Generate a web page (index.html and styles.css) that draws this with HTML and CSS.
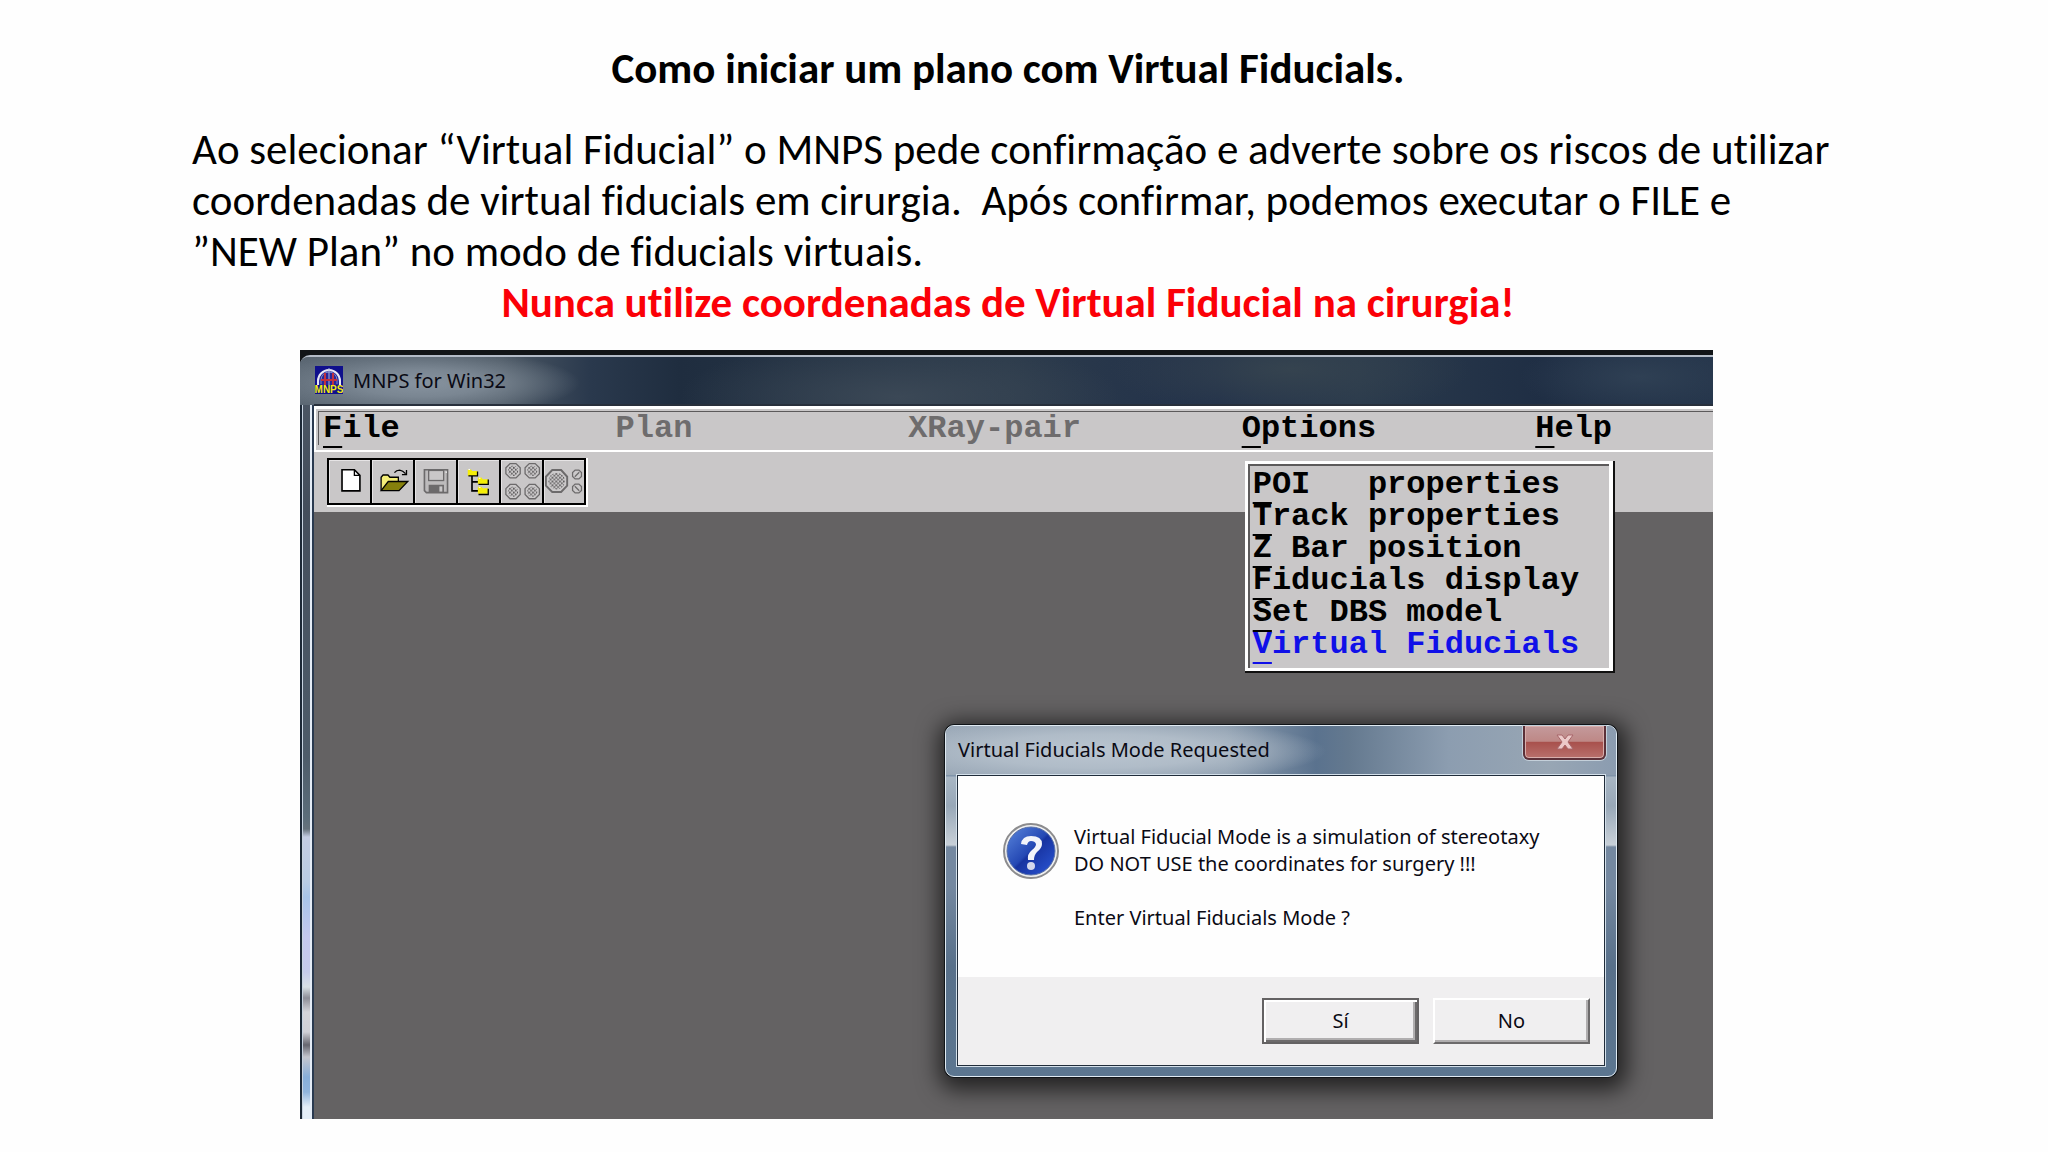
FILE: index.html
```html
<!DOCTYPE html>
<html lang="pt">
<head>
<meta charset="utf-8">
<title>Como iniciar um plano com Virtual Fiducials</title>
<link rel="stylesheet" href="styles.css">
</head>
<body>
<main class="slide">
  <h1 class="slide-title">Como iniciar um plano com Virtual Fiducials.</h1>
  <p class="slide-text">Ao selecionar “Virtual Fiducial” o MNPS pede confirmação e adverte sobre os riscos de utilizar<br>coordenadas de virtual fiducials em cirurgia.&nbsp; Após confirmar, podemos executar o FILE e<br>”NEW Plan” no modo de fiducials virtuais.</p>
  <p class="slide-warning">Nunca utilize coordenadas de Virtual Fiducial na cirurgia!</p>

  <section class="desktop" aria-label="MNPS for Win32">
    <div class="window">
      <header class="titlebar">
        <svg class="app-icon" viewBox="0 0 28 28" aria-hidden="true">
          <rect width="28" height="28" fill="#10108c"/>
          <path d="M3 19V15a11 11 0 0 1 22 0v4" fill="#26269a" stroke="#e8e8f4" stroke-width="2"/>
          <path d="M6 18V14a8 8 0 0 1 16 0v4" fill="none" stroke="#7c88c8"/>
          <path d="M14 2V19" stroke="#aab4d8" stroke-width="1"/>
          <path d="M10 7v12M18 7v12M6 14h16" stroke="#c03040" stroke-width="2"/>
          <text x="14" y="27" text-anchor="middle" class="app-icon-text">MNPS</text>
        </svg>
        <span class="title-glow">MNPS for Win32</span>
      </header>
      <div class="client">
        <nav class="menubar">
          <ul class="menus">
            <li><button class="menu"><u>F</u>ile</button></li>
            <li><button class="menu" disabled>Plan</button></li>
            <li><button class="menu" disabled>XRay-pair</button></li>
            <li class="open">
              <button class="menu"><u>O</u>ptions</button>
              <div class="dropdown">
                <div class="dropdown-inner">
                  <button class="item"><u>P</u>OI   properties</button>
                  <button class="item"><u>T</u>rack properties</button>
                  <button class="item"><u>Z</u> Bar position</button>
                  <button class="item"><u>F</u>iducials display</button>
                  <button class="item"><u>S</u>et DBS model</button>
                  <button class="item selected"><u>V</u>irtual Fiducials</button>
                </div>
              </div>
            </li>
            <li><button class="menu"><u>H</u>elp</button></li>
          </ul>
        </nav>
        <div class="toolbar">
          <div class="tools">
            <button class="tool" aria-label="New">
              <svg viewBox="100 345 126 132"><path d="M140 375H178L195 392V440H140Z" fill="#fff" stroke="#000" stroke-width="5"/><path d="M178 375V392H195" fill="none" stroke="#000" stroke-width="4"/></svg>
            </button>
            <button class="tool" aria-label="Open">
              <svg viewBox="229 345 126 132"><path d="M257 438V398L263 391H278L284 398H310V412" fill="#f4ee78" stroke="#000" stroke-width="4"/><path d="M257 439L279 411H339L312 439Z" fill="#85800c" stroke="#000" stroke-width="4"/><path d="M298 384Q304 376 314 376Q324 377 332 387M335 376V390H321" fill="none" stroke="#000" stroke-width="4"/></svg>
            </button>
            <button class="tool" aria-label="Save">
              <svg viewBox="357 345 126 132"><path d="M386 375H457V445H392L386 439Z" fill="#bdbbbc" stroke="#6c6a6b" stroke-width="5"/><rect x="399" y="377" width="46" height="31" fill="#c9c7c8" stroke="#6c6a6b" stroke-width="4"/><rect x="399" y="421" width="47" height="23" fill="#6c6a6b"/><rect x="432" y="426" width="9" height="16" fill="#c9c7c8"/><path d="M451 382h4" stroke="#fff" stroke-width="4"/></svg>
            </button>
            <button class="tool" aria-label="Tree">
              <svg viewBox="487 345 126 132"><path d="M530 392V440H550M530 412H550" fill="none" stroke="#000" stroke-width="5"/><path d="M517 374h10l4 5h16v15h-30zM548 399h11l4 5h16v15h-31zM548 427h11l4 5h16v17h-31z" fill="#f5ee08"/><path d="M519 394H547V380M550 420H580V405M550 451H580V433" fill="none" stroke="#000" stroke-width="4"/><path d="M519 374h5M551 401h5M551 429h5" stroke="#fff" stroke-width="3"/></svg>
            </button>
            <button class="tool" aria-label="Four fiducials">
              <svg viewBox="616 345 126 132">
                <defs>
                  <pattern id="dots" width="12" height="12" patternUnits="userSpaceOnUse"><path d="M0 0h5v6h6v5h-5v-5h-6z" fill="#5c5a5b"/></pattern>
                  <g id="fid"><path d="M-9-22H9L22-9V9L9 22H-9L-22 9V-9Z" fill="#cbc9ca" stroke="#6c6a6b" stroke-width="4"/><circle r="16" fill="url(#dots)"/></g>
                </defs>
                <use href="#fid" x="653" y="378"/><use href="#fid" x="712" y="378"/><use href="#fid" x="653" y="442"/><use href="#fid" x="712" y="442"/>
              </svg>
            </button>
            <button class="tool" aria-label="Single fiducial">
              <svg viewBox="744 345 126 132"><path d="M770 375H798L817 396V424L798 444H770L750 424V396Z" fill="#cbc9ca" stroke="#6c6a6b" stroke-width="6"/><circle cx="784" cy="410" r="26" fill="url(#dots)"/><g fill="#cbc9ca" stroke="#6c6a6b" stroke-width="4"><path d="M842 375h12l8 8v12l-8 8h-12l-8-8v-12zM842 419h12l8 8v12l-8 8h-12l-8-8v-12z"/><path d="M841 396L855 382M841 426L855 440"/></g></svg>
            </button>
          </div>
        </div>
        <div class="workspace">
          <section class="dialog" role="dialog" aria-labelledby="dlg-title">
            <header class="dialog-title">
              <h2 class="dialog-name" id="dlg-title">Virtual Fiducials Mode Requested</h2>
              <button class="close" aria-label="Close">
                <svg viewBox="0 0 18 16"><path d="M1 1H6L9 5L12 1H17L12 8L17 15H12L9 11L6 15H1L6 8Z" fill="#ecc9c9" stroke="#a8676b"/></svg>
              </button>
            </header>
            <div class="dialog-body">
              <div class="message">
                <svg class="question" viewBox="0 0 57 57" aria-hidden="true">
                  <defs><linearGradient id="ball" x1="0" y1="0" x2="1" y2="1"><stop offset="0" stop-color="#5a86dc"/><stop offset=".48" stop-color="#2448b4"/><stop offset=".52" stop-color="#1733a0"/><stop offset="1" stop-color="#2c58d8"/></linearGradient></defs>
                  <circle cx="28" cy="28" r="27" fill="#f0f0f0" stroke="#8c8c8e" stroke-width="2"/>
                  <circle cx="28" cy="28" r="24" fill="url(#ball)" stroke="#5870a8"/>
                  <path d="M18 21Q19 13 28 13Q39 13 39 21Q39 25 34 29Q31 32 31 37H25Q24 31 29 27Q33 24 33 21Q32 18 28 18Q25 18 24 22Z" fill="#f2f4fa"/>
                  <circle cx="28" cy="43" r="4" fill="#d4d8ec"/>
                </svg>
                <p class="message-text">Virtual Fiducial Mode is a simulation of stereotaxy<br>DO NOT USE the coordinates for surgery !!!<br><br>Enter Virtual Fiducials Mode ?</p>
              </div>
              <footer class="actions">
                <button class="action default">Sí</button>
                <button class="action">No</button>
              </footer>
            </div>
          </section>
        </div>
      </div>
    </div>
  </section>
</main>
</body>
</html>
```
FILE: styles.css
```css
* { box-sizing: border-box; }

body {
  margin: 0;
  background: #fefefe;
  color: #000;
  font-family: Calibri, Carlito, Lato, sans-serif;
}

button {
  margin: 0;
  padding: 0;
  border: 0;
  background: none;
  color: inherit;
  font: inherit;
}

.slide { padding: 43px 224px 33px 192px; }

.slide-title,
.slide-text,
.slide-warning {
  margin: 0;
  font-size: 43px;
  font-variant-ligatures: none;
  line-height: 51px;
  white-space: nowrap;
}

.slide-title {
  margin-bottom: 30px;
  font-weight: 700;
  text-align: center;
}

.slide-warning {
  color: #fb0007;
  font-weight: 700;
  text-align: center;
}

/* Application window */
.desktop {
  margin: 22px 111px 0 108px;
  padding-top: 5px;
  background: #121518;
}

.window {
  padding-left: 14px;
  border-top: 2px solid #b4bcc8;
  border-top-left-radius: 10px;
  background:
    linear-gradient(90deg, #1c2836 0 2px, #c8d4e2 2px 3px, transparent 3px 10px, #e4ecf6 10px 12px, #2a3a50 12px 14px) 0 48px / 14px 100% no-repeat,
    linear-gradient(180deg, #4d5866 0, #444e5c 150px, #4e5c6a 400px, #5b6d7a 460px, #66727c 472px, #c4cde4 480px, #b9cce4 525px, #a8c4e8 540px, #c4c8ee 580px, #c6cbea 615px, #d8dfe4 630px, #8e8e98 641px, #d4d4da 655px, #d0d0d6 675px, #66666f 688px, #c4c6ce 700px, #88aed8 720px, #90b4dc 735px, #e4eef8 750px) 0 0 / 14px 100% no-repeat,
    #26374b;
}

.titlebar {
  display: flex;
  align-items: center;
  gap: 6px;
  height: 48px;
  margin-left: -14px;
  padding: 0 0 2px 15px;
  border-top-left-radius: 8px;
  background:
    radial-gradient(ellipse 160px 34px at 120px 26px, #87939f 0, #7a8692 40%, transparent 100%),
    radial-gradient(ellipse 220px 60px at 600px 40px, #3b4856, transparent),
    radial-gradient(ellipse 180px 50px at 990px 12px, #35434f, transparent),
    radial-gradient(ellipse 120px 40px at 1340px 20px, #2f4054, transparent),
    linear-gradient(90deg, #5a6672 0, #4c5864 200px, #2a394d 290px, #1f2d3f 380px, #2c3b4b 50%, #22314a 65%, #2a3a4c 75%, #1f2e44 88%, #24344a);
}

.app-icon { width: 28px; height: 28px; }

.app-icon-text {
  fill: #f2ea10;
  font: 700 10px "Liberation Sans", sans-serif;
}

.title-glow,
.dialog {
  color: #0a0a14;
  font-family: "Segoe UI", "Noto Sans", sans-serif;
  font-size: 20px;
}

.title-glow { padding-left: 4px; }

.client {
  border-top: 1px solid #c4d4e0;
  background: #c9c7c8;
}

.menubar {
  padding: 2px 0 5px 2px;
  border: solid #fff;
  border-width: 3px 0 2px 2px;
  box-shadow: 0 -2px #28303c;
}

.menus {
  display: grid;
  grid-template-columns: 293fr 293fr 334fr 294fr 178fr;
  margin: 0;
  padding: 1px 0 0 4px;
  border: solid #5c5a5b;
  border-width: 1px 0 0 1px;
  list-style: none;
}

.menu,
.item {
  display: block;
  height: 32px;
  font: 700 32px/32px "Courier 10 Pitch", "Liberation Mono", monospace;
  text-align: left;
  white-space: pre;
}

.menu:disabled { color: #6e6c6d; }

.menu u,
.item u {
  text-decoration-thickness: 2px;
  text-underline-offset: 9px;
  text-decoration-skip-ink: none;
}

.open { position: relative; }

.dropdown {
  position: absolute;
  z-index: 1;
  top: 48px;
  left: 3px;
  width: 370px;
  border: solid #101010;
  border-width: 0 2px 2px 0;
  background: #c9c7c8;
}

.dropdown-inner {
  padding: 5px 0 7px 5px;
  border: 3px solid #fff;
  border-right-width: 4px;
  box-shadow: inset 2px 2px #5c5a5b;
}

.item.selected { color: #1010e8; }

.toolbar { padding: 6px 13px 5px; }

.tools {
  display: inline-flex;
  vertical-align: top;
  border: solid #fff;
  border-width: 0 2px 2px 0;
}

.tool {
  width: 43px;
  height: 47px;
  border: solid #000;
  border-width: 2px 0 2px 2px;
  box-shadow: inset 1px 1px #e6e4e5;
}

.tool:last-child { width: 44px; border-right-width: 2px; }
.tool svg { display: block; width: 41px; height: 43px; }
.tool:last-child svg { width: 40px; }

.workspace {
  position: relative;
  min-height: 607px;
  background: #646263;
}

/* Message box */
.dialog {
  position: absolute;
  top: 213px;
  right: 96px;
  width: 672px;
  padding: 0 11px 10px;
  border: 1px solid #e0eaf2;
  border-radius: 9px;
  background:
    linear-gradient(180deg, transparent 50px, #a8b6c4 51px, #98a8b8 80px, #c8d0d8 119px, #7488a0 121px, #7488a0 160px, #58708a 240px, #5c7690 100%) no-repeat,
    #8094aa;
  box-shadow: 0 0 0 1px #101418, 2px 5px 22px 8px rgba(0, 0, 0, .65);
}

.dialog-title {
  display: flex;
  justify-content: space-between;
  height: 49px;
  margin: 0 -11px;
  padding: 0 10px 0 11px;
  border-radius: 8px 8px 0 0;
  background:
    radial-gradient(ellipse 230px 34px at 150px 25px, #bac5d0 0, #b0bcc8 50%, transparent 100%),
    linear-gradient(90deg, #98a6b5 0, #8e9eaf 280px, #5a728e 370px, #64798f 60%, #8c9db0 75%, #98a6b4 90%, #8b9cb0);
}

.dialog-name {
  margin: 0;
  padding-left: 1px;
  font-size: 20px;
  font-weight: 400;
  line-height: 47px;
}

.close {
  display: grid;
  place-items: center;
  width: 83px;
  height: 34px;
  border: solid #5c3038;
  border-width: 0 2px 2px;
  border-radius: 0 0 6px 6px;
  background: linear-gradient(180deg, #c49a9c 0, #be8886 48%, #a8504c 50%, #b8706c 100%);
  box-shadow: 0 0 0 1px #c4d0da, inset 0 0 0 1px #d8aeac;
}

.close svg { width: 18px; height: 16px; }

.dialog-body {
  border: 1px solid #202c3a;
  background: #fefefe;
  box-shadow: 0 0 0 1px #d4e0ea;
}

.message {
  display: flex;
  align-items: flex-start;
  gap: 14px;
  height: 201px;
  padding: 47px 20px 0 45px;
}

.question { flex: none; width: 57px; height: 57px; }

.message-text {
  margin: 0;
  line-height: 27px;
  white-space: nowrap;
}

.actions {
  display: flex;
  justify-content: flex-end;
  gap: 14px;
  padding: 21px 14px;
  background: #f0eff0;
}

.action {
  width: 157px;
  height: 46px;
  padding-bottom: 2px;
  border: 2px solid;
  border-color: #fff #6c6a6b #6c6a6b #fff;
  box-shadow: inset -2px -2px #b0aeaf;
}

.action.default {
  border-color: #646263;
  box-shadow: inset 2px 2px #fff, inset -2px -2px #6c6a6b, inset -4px -4px #b0aeaf;
}
```
